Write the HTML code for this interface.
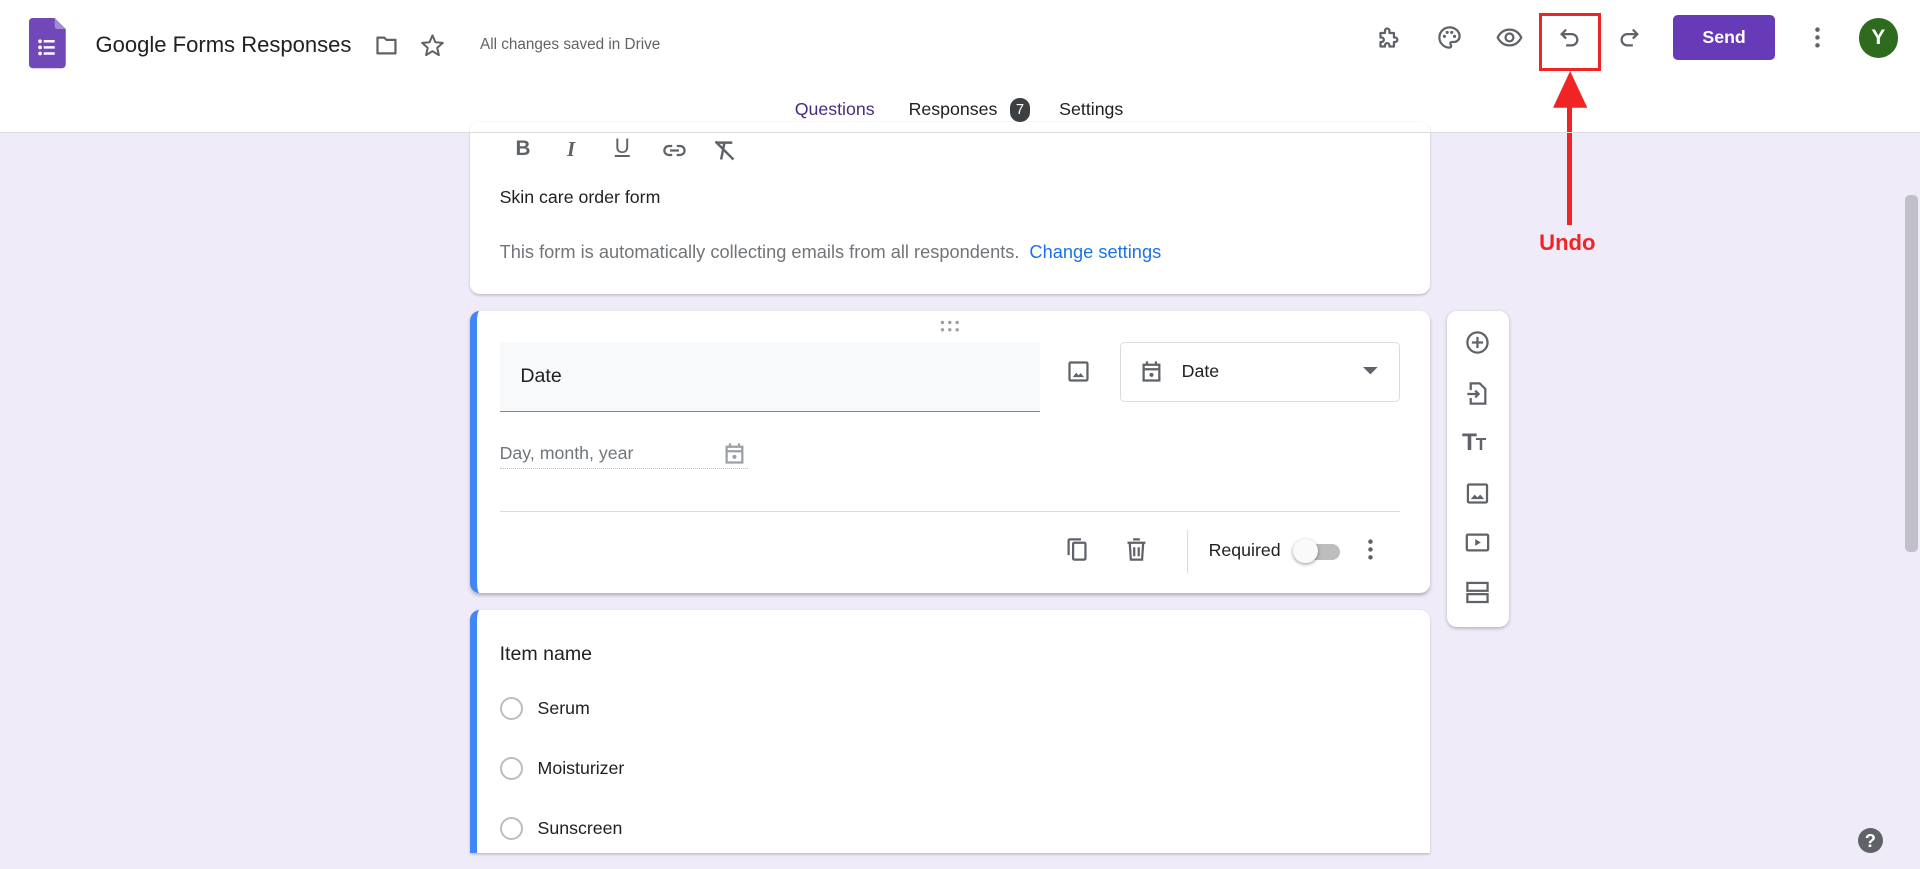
<!DOCTYPE html>
<html><head><meta charset="utf-8"><style>
html,body{margin:0;padding:0;width:1920px;height:869px;overflow:hidden;background:#f0ebf8;font-family:"Liberation Sans",Arial,sans-serif;}
#w{zoom:1.22449;position:relative;width:1568px;height:710px;overflow:hidden;background:#f0ebf8;}
.a{position:absolute;}
.hdr{left:0;top:0;width:1568px;height:108px;background:#fff;border-bottom:1px solid #dadce0;}
.ic{position:absolute;width:22px;height:22px;}
.card{position:absolute;background:#fff;border-radius:8px;box-shadow:0 1px 2px rgba(0,0,0,.2);}
.t{position:absolute;white-space:nowrap;}
svg{display:block}
</style></head><body><div id="w">
<div class="a hdr"></div>
<svg class="a" style="left:24px;top:15px" width="30" height="41" viewBox="0 0 30 41"><path d="M3 0h18l9 9v29a3 3 0 0 1-3 3H3a3 3 0 0 1-3-3V3a3 3 0 0 1 3-3z" fill="#7248b9"/><path d="M21 0l9 9h-7a2 2 0 0 1-2-2z" fill="#a48ad4"/><g fill="#fff"><circle cx="9" cy="19" r="1.5"/><circle cx="9" cy="24" r="1.5"/><circle cx="9" cy="29" r="1.5"/><rect x="12" y="18" width="9" height="2"/><rect x="12" y="23" width="9" height="2"/><rect x="12" y="28" width="9" height="2"/></g></svg>
<div class="t" style="left:78px;top:26px;font-size:18px;color:#202124">Google Forms Responses</div>
<svg class="ic" style="left:305px;top:26px" viewBox="0 0 24 24"><path d="M4 5h6l2 2h8v12H4z" fill="none" stroke="#5f6368" stroke-width="2" stroke-linejoin="round"/></svg>
<svg class="ic" style="left:342px;top:26px" viewBox="0 0 24 24"><path d="M12 3l2.6 6.1 6.6.6-5 4.4 1.5 6.5L12 17.1 6.3 20.6l1.5-6.5-5-4.4 6.6-.6z" fill="none" stroke="#5f6368" stroke-width="1.8" stroke-linejoin="round"/></svg>
<div class="t" style="left:392px;top:29px;font-size:12.5px;color:#5f6368">All changes saved in Drive</div>
<svg class="ic" style="left:1124px;top:20px" viewBox="0 0 24 24"><path d="M4 8h4V6a2 2 0 0 1 4 0v2h4v4h1a2 2 0 0 1 0 4h-1v4h-4v-1a2 2 0 0 0-4 0v1H4v-4h1a2 2 0 0 0 0-4H4z" fill="none" stroke="#5f6368" stroke-width="2" stroke-linejoin="round"/></svg>
<svg class="ic" style="left:1173px;top:20px" viewBox="0 0 24 24"><path d="M12 3a9 9 0 0 0 0 18c1 0 1.5-.7 1.5-1.5 0-1-.8-1.3-.8-2.2 0-.8.7-1.3 1.5-1.3H16a5 5 0 0 0 5-5C21 6.5 17 3 12 3z" fill="none" stroke="#5f6368" stroke-width="2"/><circle cx="7.5" cy="11" r="1.4" fill="#5f6368"/><circle cx="10" cy="7.5" r="1.4" fill="#5f6368"/><circle cx="14" cy="7.5" r="1.4" fill="#5f6368"/><circle cx="16.5" cy="11" r="1.4" fill="#5f6368"/></svg>
<svg class="ic" style="left:1222px;top:20px" viewBox="0 0 24 24"><path d="M1.5 12C4 7 8 5 12 5s8 2 10.5 7C20 17 16 19 12 19s-8-2-10.5-7z" fill="none" stroke="#5f6368" stroke-width="2"/><circle cx="12" cy="12" r="3.5" fill="none" stroke="#5f6368" stroke-width="2"/></svg>
<svg class="ic" style="left:1271px;top:20px" viewBox="0 0 24 24"><path d="M9 5L5 9l4 4M5 9h9a5 5 0 0 1 0 10H9" fill="none" stroke="#5f6368" stroke-width="2"/></svg>
<svg class="ic" style="left:1320px;top:20px" viewBox="0 0 24 24"><path d="M15 5l4 4-4 4M19 9h-9a5 5 0 0 0 0 10h5" fill="none" stroke="#5f6368" stroke-width="2"/></svg>
<div class="a" style="left:1257px;top:11px;width:46px;height:42px;border:3px solid #f02424"></div>
<div class="a" style="left:1280px;top:84px;width:4px;height:100px;background:#f02424"></div>
<svg class="a" style="left:1268px;top:58px" width="28" height="30"><path d="M14 0L28 30H0z" fill="#f02424"/></svg>
<div class="t" style="left:1257px;top:188px;font-size:18px;font-weight:bold;color:#f02424">Undo</div>
<div class="a" style="left:1366px;top:12px;width:84px;height:37px;background:#673ab7;border-radius:4px;color:#fff;font-weight:bold;font-size:14.5px;text-align:center;line-height:37px">Send</div>
<svg class="ic" style="left:1473px;top:20px" viewBox="0 0 24 24"><circle cx="12" cy="5" r="2" fill="#5f6368"/><circle cx="12" cy="12" r="2" fill="#5f6368"/><circle cx="12" cy="19" r="2" fill="#5f6368"/></svg>
<div class="a" style="left:1518px;top:15px;width:32px;height:32px;border-radius:50%;background:#2e6b1f;color:#fff;font-size:17px;font-weight:bold;text-align:center;line-height:32px">Y</div>
<div class="t" style="left:649px;top:81px;font-size:14.5px;color:#4a2b80">Questions</div>
<div class="a" style="left:640px;top:104px;width:88px;height:4px;background:#673ab7;border-radius:3px 3px 0 0"></div>
<div class="t" style="left:742px;top:81px;font-size:14.5px;color:#202124">Responses</div>
<div class="a" style="left:825px;top:80px;width:16px;height:20px;border-radius:8px;background:#3c4043;color:#fff;font-size:12px;text-align:center;line-height:20px">7</div>
<div class="t" style="left:865px;top:81px;font-size:14.5px;color:#202124">Settings</div>
<div class="card" style="left:384px;top:100px;width:784px;height:140px;z-index:0"></div>
<div class="a hdr" style="z-index:1;height:0;top:108px;border-bottom:1px solid #dadce0"></div>
<div class="t" style="left:421px;top:112px;font-size:17px;font-weight:bold;color:#5f6368">B</div>
<div class="t" style="left:463px;top:112px;font-size:17px;font-weight:bold;font-style:italic;color:#5f6368;font-family:'Liberation Serif',serif">I</div>
<div class="t" style="left:502px;top:110px;font-size:17px;color:#5f6368;text-decoration:underline">U</div>
<svg class="ic" style="left:540px;top:112px" viewBox="0 0 24 24"><path d="M10 8H7a4 4 0 0 0 0 8h3M14 8h3a4 4 0 0 1 0 8h-3M8 12h8" fill="none" stroke="#5f6368" stroke-width="2"/></svg>
<svg class="ic" style="left:581px;top:112px" viewBox="0 0 24 24"><path d="M5 5h14M12 5l-3 15M4 4l16 16" fill="none" stroke="#5f6368" stroke-width="2.2"/></svg>
<div class="t" style="left:408px;top:153px;font-size:14.5px;color:#202124">Skin care order form</div>
<div class="t" style="left:408px;top:197px;font-size:14.9px;color:#70757a">This form is automatically collecting emails from all respondents. <span style="color:#1a73e8;margin-left:4px">Change settings</span></div>
<div class="card" style="left:384px;top:254px;width:784px;height:230px;border-left:6px solid #4285f4;box-sizing:border-box;box-shadow:0 2px 3px rgba(0,0,0,.25)"></div>
<svg class="a" style="left:768px;top:261px" width="16" height="10"><g fill="#9aa0a6"><circle cx="2" cy="2" r="1.4"/><circle cx="8" cy="2" r="1.4"/><circle cx="14" cy="2" r="1.4"/><circle cx="2" cy="8" r="1.4"/><circle cx="8" cy="8" r="1.4"/><circle cx="14" cy="8" r="1.4"/></g></svg>
<div class="a" style="left:408px;top:279px;width:441px;height:57px;background:#f8f9fa;border-bottom:1.5px solid #80868b"></div>
<div class="t" style="left:425px;top:298px;font-size:16px;color:#202124">Date</div>
<svg class="ic" style="left:870px;top:292px" viewBox="0 0 24 24"><rect x="4" y="4" width="16" height="16" rx="1" fill="none" stroke="#5f6368" stroke-width="2"/><path d="M7 17l3-4 2 2.5 2-2 3 3.5z" fill="#5f6368"/></svg>
<div class="a" style="left:915px;top:279px;width:228px;height:49px;border:1px solid #dadce0;border-radius:4px;box-sizing:border-box"></div>
<svg class="ic" style="left:929px;top:292px" viewBox="0 0 24 24"><path d="M5 6h14v14H5zM5 10h14M8 3v4M16 3v4" fill="none" stroke="#5f6368" stroke-width="2"/><circle cx="12" cy="15" r="1.8" fill="#5f6368"/></svg>
<div class="t" style="left:965px;top:295px;font-size:14.5px;color:#202124">Date</div>
<svg class="a" style="left:1113px;top:300px" width="12" height="6"><path d="M0 0h12L6 6z" fill="#5f6368"/></svg>
<div class="t" style="left:408px;top:362px;font-size:14.5px;color:#70757a">Day, month, year</div>
<svg class="ic" style="left:589px;top:359px" viewBox="0 0 24 24"><path d="M5 6h14v14H5zM5 10h14M8 3v4M16 3v4" fill="none" stroke="#9aa0a6" stroke-width="2"/><circle cx="12" cy="15" r="1.8" fill="#9aa0a6"/></svg>
<div class="a" style="left:408px;top:382px;width:203px;height:0;border-top:1.5px dotted #bdc1c6"></div>
<div class="a" style="left:408px;top:417px;width:735px;height:1px;background:#dadce0"></div>
<svg class="ic" style="left:868px;top:438px" viewBox="0 0 24 24"><path d="M16 2H6a2 2 0 0 0-2 2v13h2V4h10z" fill="#5f6368"/><rect x="9" y="6" width="11" height="15" rx="1" fill="none" stroke="#5f6368" stroke-width="2"/></svg>
<svg class="ic" style="left:917px;top:438px" viewBox="0 0 24 24"><path d="M4 6h16M9 3h6M6 6l1 15h10l1-15M10 10v8M14 10v8" fill="none" stroke="#5f6368" stroke-width="2"/></svg>
<div class="a" style="left:969px;top:433px;width:1px;height:35px;background:#dadce0"></div>
<div class="t" style="left:987px;top:441px;font-size:14.5px;color:#202124">Required</div>
<div class="a" style="left:1059px;top:444px;width:35px;height:13px;border-radius:7px;background:#bdbdbd"></div>
<div class="a" style="left:1056px;top:440px;width:20px;height:20px;border-radius:50%;background:#fafafa;box-shadow:0 1px 3px rgba(0,0,0,.4)"></div>
<svg class="ic" style="left:1108px;top:438px" viewBox="0 0 24 24"><circle cx="12" cy="5" r="2" fill="#5f6368"/><circle cx="12" cy="12" r="2" fill="#5f6368"/><circle cx="12" cy="19" r="2" fill="#5f6368"/></svg>
<div class="card" style="left:1182px;top:254px;width:50px;height:258px;box-shadow:0 1px 3px rgba(0,0,0,.25)"></div>
<svg class="ic" style="left:1196px;top:269px" viewBox="0 0 24 24"><circle cx="12" cy="12" r="9" fill="none" stroke="#5f6368" stroke-width="2"/><path d="M12 7v10M7 12h10" stroke="#5f6368" stroke-width="2"/></svg>
<svg class="ic" style="left:1196px;top:310px" viewBox="0 0 24 24"><path d="M6 9V3h8l5 5v13H6v-5" fill="none" stroke="#5f6368" stroke-width="2"/><path d="M3 12.5h10M10 9.5l3 3-3 3" fill="none" stroke="#5f6368" stroke-width="2"/></svg>
<div class="t" style="left:1194px;top:350px;font-size:20px;font-weight:bold;color:#5f6368;letter-spacing:-1px">T<span style="font-size:14px">T</span></div>
<svg class="ic" style="left:1196px;top:392px" viewBox="0 0 24 24"><rect x="3.5" y="4" width="17" height="16" rx="1" fill="none" stroke="#5f6368" stroke-width="2"/><path d="M6 17l3.5-4 2.5 2.5 2.5-2.5 3.5 4z" fill="#5f6368"/></svg>
<svg class="ic" style="left:1196px;top:432px" viewBox="0 0 24 24"><rect x="2.5" y="5" width="19" height="14" rx="1" fill="none" stroke="#5f6368" stroke-width="2"/><path d="M10 9l5 3-5 3z" fill="#5f6368"/></svg>
<svg class="ic" style="left:1196px;top:473px" viewBox="0 0 24 24"><rect x="3" y="3.5" width="18" height="7" fill="none" stroke="#5f6368" stroke-width="2"/><rect x="3" y="13.5" width="18" height="7" fill="none" stroke="#5f6368" stroke-width="2"/></svg>
<div class="card" style="left:384px;top:498px;width:784px;height:199px;border-left:6px solid #4285f4;box-sizing:border-box;border-radius:8px 8px 0 0"></div>
<div class="t" style="left:408px;top:525px;font-size:16px;color:#202124">Item name</div>
<div class="a" style="left:408px;top:569px;width:16px;height:16px;border:2px solid #bdbdbd;border-radius:50%"></div>
<div class="t" style="left:439px;top:570px;font-size:14.5px;color:#202124">Serum</div>
<div class="a" style="left:408px;top:618px;width:16px;height:16px;border:2px solid #bdbdbd;border-radius:50%"></div>
<div class="t" style="left:439px;top:619px;font-size:14.5px;color:#202124">Moisturizer</div>
<div class="a" style="left:408px;top:667px;width:16px;height:16px;border:2px solid #bdbdbd;border-radius:50%"></div>
<div class="t" style="left:439px;top:668px;font-size:14.5px;color:#202124">Sunscreen</div>
<div class="a" style="left:1556px;top:159px;width:10px;height:292px;border-radius:4px;background:#c1bfca"></div>
<div class="a" style="left:1517px;top:676px;width:21px;height:21px;border-radius:50%;background:#5f6368;color:#fff;font-size:15px;font-weight:bold;text-align:center;line-height:21px">?</div>
</div></body></html>
